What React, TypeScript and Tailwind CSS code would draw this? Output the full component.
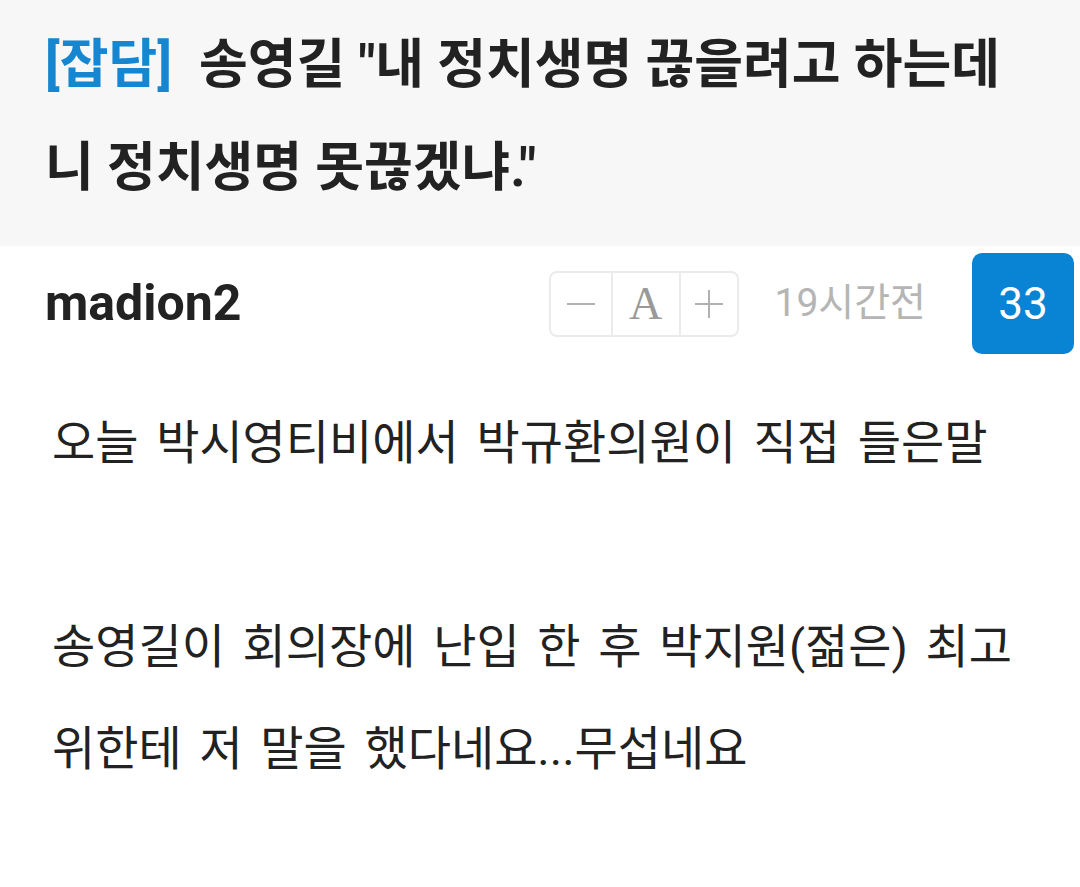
import React from 'react';

const sans = { fontFamily: 'Roboto, "Noto Sans CJK KR", sans-serif' };

const FontSizer = () => {
  return (
    <div className="flex h-[66px] w-[190px] rounded-lg border-2 border-[#ebebeb] overflow-hidden">
      <button className="flex w-[60px] items-center justify-center">
        <svg width="28" height="4" viewBox="0 0 28 4">
          <line x1="0" y1="2" x2="28" y2="2" stroke="#b0b0b0" strokeWidth="2" />
        </svg>
      </button>
      <button className="flex w-[70px] items-center justify-center border-x-2 border-[#ebebeb]">
        <span className="text-[46px] leading-none text-[#999] font-['Liberation_Serif',serif]">A</span>
      </button>
      <button className="flex flex-1 items-center justify-center">
        <svg width="28" height="28" viewBox="0 0 28 28">
          <line x1="0" y1="14" x2="28" y2="14" stroke="#b0b0b0" strokeWidth="2" />
          <line x1="14" y1="0" x2="14" y2="28" stroke="#b0b0b0" strokeWidth="2" />
        </svg>
      </button>
    </div>
  );
};

const App = () => {
  return (
    <div className="min-h-screen bg-white text-[#222]" style={sans}>
      {/* Title */}
      <header className="bg-[#f7f7f7] pl-[45px] pr-[45px] pt-[14px] pb-[26px]">
        <h1 className="text-[53px] font-bold leading-[103px]">
          <span className="mr-[14px] text-[#1686d0]">[잡담]</span> 송영길 "내 정치생명 끊을려고 하는데 니 정치생명 못끊겠냐."
        </h1>
      </header>

      {/* Author row */}
      <div className="flex items-center justify-between pl-[45px] pr-[6px] pt-[7px]">
        <span className="text-[50px] font-bold">madion2</span>
        <div className="flex items-center">
          <FontSizer />
          <span className="ml-[36px] text-[39px] text-[#b5b5b5]">19시간전</span>
          <span className="ml-[46px] flex h-[101px] w-[102px] items-center justify-center rounded-[10px] bg-[#0983d3] text-[44px] text-white">
            33
          </span>
        </div>
      </div>

      {/* Body */}
      <article className="pl-[52px] pr-[40px] pt-[38px] text-[47px] leading-[102px] [word-spacing:6px]">
        <p>오늘 박시영티비에서 박규환의원이 직접 들은말</p>
        <p><br /></p>
        <p>송영길이 회의장에 난입 한 후 박지원(젊은) 최고위한테 저 말을 했다네요...무섭네요</p>
      </article>
    </div>
  );
};

export default App;
